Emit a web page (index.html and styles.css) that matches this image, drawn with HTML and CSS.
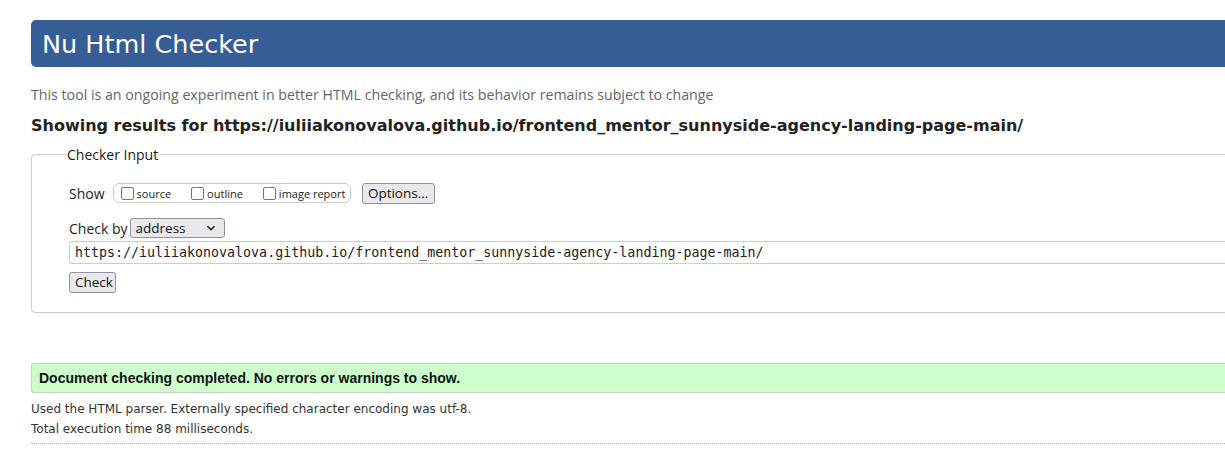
FILE: index.html
```html
<!DOCTYPE html>
<html lang="en">
<head>
<meta charset="utf-8">
<title>Nu Html Checker</title>
<link rel="stylesheet" href="styles.css">
</head>
<body>
<div class="page">
  <h1 class="banner">Nu Html Checker</h1>
  <p class="tagline">This tool is an ongoing experiment in better HTML checking, and its behavior remains subject to change</p>
  <p class="showing">Showing results for https://iuliiakonovalova.github.io/frontend_mentor_sunnyside-agency-landing-page-main/</p>
  <fieldset class="input-box">
    <legend class="legend">Checker Input</legend>
    <div class="row show-row">
      <span class="label">Show</span>
      <div class="show-group">
        <label class="opt"><span class="cb"></span>source</label>
        <label class="opt"><span class="cb"></span>outline</label>
        <label class="opt"><span class="cb"></span>image report</label>
      </div>
      <button class="btn options">Options…</button>
    </div>
    <div class="row checkby-row">
      <span class="label">Check by</span>
      <div class="select">address<svg class="chev" width="10" height="6" viewBox="0 0 10 6"><path d="M1.5 1.2 L5 4.6 L8.5 1.2" fill="none" stroke="#222" stroke-width="1.5"/></svg></div>
    </div>
    <div class="url">https://iuliiakonovalova.github.io/frontend_mentor_sunnyside-agency-landing-page-main/</div>
    <button class="btn check">Check</button>
  </fieldset>
  <div class="success">Document checking completed. No errors or warnings to show.</div>
  <p class="meta">Used the HTML parser. Externally specified character encoding was utf-8.</p>
  <p class="meta">Total execution time 88 milliseconds.</p>
  <div class="rule"></div>
</div>
</body>
</html>
```

FILE: styles.css
```css
html, body {
  margin: 0;
  padding: 0;
  overflow: hidden;
  background: #fff;
}
.page {
  width: 1260px;
  padding: 20px 0 0 31px;
  font-family: "DejaVu Sans", sans-serif;
  color: #222;
}
.banner {
  margin: 0;
  height: 47px;
  box-sizing: border-box;
  padding: 0 0 0 11px;
  background: #365d95;
  border-radius: 5px 0 0 5px;
  color: #fff;
  font-family: "DejaVu Sans", sans-serif;
  font-weight: normal;
  font-size: 25.5px;
  line-height: 49px;
}
.tagline {
  margin: 19px 0 0;
  font-family: "Open Sans", sans-serif;
  font-size: 14.2px;
  line-height: 18px;
  color: #666;
}
.showing {
  margin: 12px 0 0;
  font-family: "DejaVu Sans", sans-serif;
  font-weight: bold;
  font-size: 16px;
  line-height: 20px;
  color: #222;
}
.input-box {
  margin: 9px 0 0;
  padding: 18px 0 19px 37px;
  border: 1px solid #ccc;
  border-radius: 4px 0 0 4px;
  min-width: 0;
}
.legend {
  margin-left: -2px;
  padding: 0;
  font-family: "Open Sans", sans-serif;
  font-size: 14px;
  color: #222;
}
.row {
  display: flex;
  align-items: center;
}
.label {
  font-family: "Open Sans", sans-serif;
  font-size: 14px;
  color: #222;
}
.show-row {
  height: 22px;
}
.show-group {
  margin-left: 8px;
  display: flex;
  align-items: center;
  gap: 20px;
  height: 20px;
  box-sizing: border-box;
  width: 238px;
  padding: 0 0 0 7px;
  border: 1px solid #ccc;
  border-radius: 6px;
}
.opt {
  display: flex;
  align-items: center;
  font-family: "Open Sans", sans-serif;
  font-size: 11px;
  color: #222;
  gap: 3px;
}
.cb {
  width: 13px;
  height: 13px;
  box-sizing: border-box;
  border: 1px solid #767676;
  border-radius: 2px;
  background: #fff;
}
.btn {
  font-family: "Open Sans", sans-serif;
  font-size: 13.5px;
  color: #111;
  background: #e9e9ed;
  border: 1px solid #8f8f9d;
  border-radius: 3px;
  padding: 0 5px;
  height: 21px;
  line-height: 19px;
}
.options {
  margin-left: 11px;
  width: 73px;
}
.checkby-row {
  margin-top: 13px;
  height: 22px;
}
.select {
  margin-left: 2px;
  width: 95px;
  height: 20px;
  box-sizing: border-box;
  display: flex;
  align-items: center;
  justify-content: space-between;
  padding: 0 8px 0 5px;
  font-family: "Open Sans", sans-serif;
  font-size: 13.5px;
  color: #111;
  background: #e9e9ed;
  border: 1px solid #8f8f9d;
  border-radius: 3px;
}
.url {
  margin-top: 2px;
  height: 23px;
  box-sizing: border-box;
  padding: 0 0 0 5px;
  border: 1px solid #ccc;
  border-right: none;
  border-radius: 3px 0 0 3px;
  font-family: "DejaVu Sans Mono", monospace;
  font-size: 13.3px;
  line-height: 21px;
  color: #222;
}
.check {
  margin-top: 8px;
  display: block;
  width: 47px;
}
.success {
  margin-top: 50px;
  height: 30px;
  box-sizing: border-box;
  padding: 0 0 0 7px;
  background: #ccffcc;
  border: 1px solid #ccc;
  border-right: none;
  border-radius: 3px 0 0 3px;
  font-family: "Liberation Sans", Arial, sans-serif;
  font-weight: bold;
  font-size: 14px;
  line-height: 28px;
  color: #111;
}
.meta {
  margin: 0;
  font-family: "DejaVu Sans", sans-serif;
  font-size: 12px;
  line-height: 20px;
  color: #333;
}
.success + .meta {
  margin-top: 6px;
}
.rule {
  margin-top: 4px;
  border-top: 1px dotted #aaa;
}
```
